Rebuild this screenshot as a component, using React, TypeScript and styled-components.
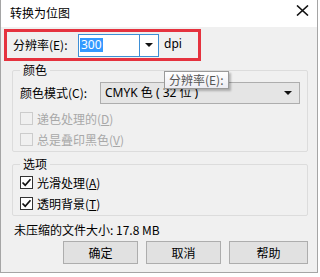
import styled, { createGlobalStyle } from "styled-components";

const GlobalStyle = createGlobalStyle`
  html, body {
    margin: 0;
    padding: 0;
    background: #ffffff;
  }
  body {
    font-family: "Noto Sans CJK SC", "Noto Sans", sans-serif;
    font-size: 12px;
    color: #000;
  }
`;

const App = () => {
  return (
    <>
      <GlobalStyle />
      <Window>
        <TitleBar>
          <Title>转换为位图</Title>
          <CloseButton>
            <svg width="13" height="11" viewBox="0 0 13 11">
              <path d="M1 0.5 L12 10.5 M12 0.5 L1 10.5" stroke="#111" strokeWidth="1.6" />
            </svg>
          </CloseButton>
        </TitleBar>
        <Body>
          <Highlight>
            <FieldLabel width={65}>分辨率(E):</FieldLabel>
            <Combo>
              <ComboValue>
                <Selected>300</Selected>
              </ComboValue>
              <ComboArrow focused>
                <Triangle />
              </ComboArrow>
            </Combo>
            <Unit>dpi</Unit>
          </Highlight>

          <Group>
            <Legend>颜色</Legend>
            <SelectRow>
              <FieldLabel width={80}>颜色模式(C):</FieldLabel>
              <Select>
                <span>CMYK 色 ( 32 位 )</span>
                <Triangle />
              </Select>
            </SelectRow>
            <CheckRow disabled>
              <CheckBox disabled />
              <span>
                递色处理的(<u>D</u>)
              </span>
            </CheckRow>
            <CheckRow disabled>
              <CheckBox disabled />
              <span>
                总是叠印黑色(<u>V</u>)
              </span>
            </CheckRow>
          </Group>

          <Group spaced>
            <Legend>选项</Legend>
            <CheckRow>
              <CheckBox>
                <CheckMark />
              </CheckBox>
              <span>
                光滑处理(<u>A</u>)
              </span>
            </CheckRow>
            <CheckRow>
              <CheckBox>
                <CheckMark />
              </CheckBox>
              <span>
                透明背景(<u>T</u>)
              </span>
            </CheckRow>
          </Group>

          <Status>未压缩的文件大小: 17.8 MB</Status>

          <ButtonRow>
            <Button width={75}>确定</Button>
            <Button width={75}>取消</Button>
            <Button width={79}>帮助</Button>
          </ButtonRow>
        </Body>
        <Tooltip>分辨率(E):</Tooltip>
      </Window>
    </>
  );
};

const CheckMark = () => (
  <svg width="11" height="11" viewBox="0 0 11 11">
    <path d="M1.5 5.5 L4.2 8.2 L9.5 2.2" fill="none" stroke="#111" strokeWidth="1.7" />
  </svg>
);

const Window = styled.div`
  position: relative;
  width: 316px;
  height: 272px;
  border: 1px solid #a5a5a5;
  border-top: none;
  background: #f0f0f0;
  display: flex;
  flex-direction: column;
`;

const TitleBar = styled.div`
  height: 27px;
  background: #ffffff;
  display: flex;
  align-items: center;
  justify-content: space-between;
  padding: 0 8px 2px 9px;
  box-sizing: border-box;
`;

const Title = styled.div`
  font-size: 12px;
  line-height: 16px;
`;

const CloseButton = styled.div`
  display: flex;
  margin-top: -4px;
`;

const Body = styled.div`
  display: flex;
  flex-direction: column;
  padding: 2px 9px 0 3px;
`;

const Highlight = styled.div`
  width: 197px;
  height: 32px;
  box-sizing: border-box;
  border: 3px solid #e5323e;
  display: flex;
  align-items: center;
  padding-left: 6px;
`;

interface IWidth {
  width: number;
}

const FieldLabel = styled.div<IWidth>`
  width: ${(p) => p.width}px;
  flex-shrink: 0;
  line-height: 16px;
  white-space: nowrap;
`;

const Combo = styled.div`
  width: 81px;
  height: 23px;
  box-sizing: border-box;
  border: 1px solid #3d8fd6;
  background: #fff;
  display: flex;
`;

const ComboValue = styled.div`
  flex: 1;
  display: flex;
  align-items: center;
  padding-left: 1px;
`;

const Selected = styled.span`
  background: #3399ff;
  color: #fff;
  font-family: "Noto Sans", sans-serif;
  font-size: 12px;
  line-height: 14px;
  padding: 0 1px;
`;

const ComboArrow = styled.div<{ focused?: boolean }>`
  width: 18px;
  border-left: 1px solid ${(p) => (p.focused ? "#3d8fd6" : "#acacac")};
  display: flex;
  align-items: center;
  justify-content: center;
`;

const Triangle = styled.div`
  width: 0;
  height: 0;
  border-left: 4px solid transparent;
  border-right: 4px solid transparent;
  border-top: 4px solid #111;
`;

const Unit = styled.div`
  margin-left: 5px;
  font-family: "Noto Sans", sans-serif;
  line-height: 16px;
  padding-bottom: 2px;
`;

const Group = styled.fieldset<{ spaced?: boolean }>`
  margin: ${(p) => (p.spaced ? "4px" : "1px")} 0 0 8px;
  padding: 0 7px 1px 7px;
  border: 1px solid #dcdcdc;
  border-radius: 2px;
  width: 296px;
  box-sizing: border-box;
  min-width: 0;
`;

const Legend = styled.legend`
  padding: 0 3px;
  line-height: 16px;
  font-size: 12px;
`;

const SelectRow = styled.div`
  display: flex;
  align-items: center;
  margin-top: 4px;
  margin-bottom: 4px;
`;

const Select = styled.div`
  flex: 1;
  height: 22px;
  box-sizing: border-box;
  border: 1px solid #adadad;
  background: #e5e5e5;
  display: flex;
  align-items: center;
  justify-content: space-between;
  padding: 0 7px 0 4px;
  font-family: "Noto Sans", "Noto Sans CJK SC", sans-serif;
  line-height: 16px;
`;

const CheckRow = styled.div<{ disabled?: boolean }>`
  height: 21px;
  display: flex;
  align-items: center;
  gap: 4px;
  color: ${(p) => (p.disabled ? "#a8a8a8" : "#000")};
  line-height: 16px;
`;

const CheckBox = styled.div<{ disabled?: boolean }>`
  width: 13px;
  height: 13px;
  box-sizing: border-box;
  border: 1px solid ${(p) => (p.disabled ? "#cccccc" : "#333")};
  background: ${(p) => (p.disabled ? "#f0f0f0" : "#fff")};
  display: flex;
  align-items: center;
  justify-content: center;
`;

const Status = styled.div`
  margin: 6px 0 0 10px;
  line-height: 16px;
`;

const ButtonRow = styled.div`
  display: flex;
  justify-content: flex-end;
  gap: 8px;
  margin-top: 3px;
`;

const Button = styled.div<IWidth>`
  width: ${(p) => p.width}px;
  height: 23px;
  box-sizing: border-box;
  border: 1px solid #adadad;
  background: #e1e1e1;
  display: flex;
  align-items: center;
  justify-content: center;
  line-height: 16px;
`;

const Tooltip = styled.div`
  position: absolute;
  left: 163px;
  top: 71px;
  height: 18px;
  box-sizing: border-box;
  padding: 0 4px;
  border: 1px solid #9a9a9a;
  background: linear-gradient(#ffffff, #ececf2);
  box-shadow: 2px 2px 2px rgba(0, 0, 0, 0.25);
  display: flex;
  align-items: center;
  color: #555;
  line-height: 16px;
`;

export default App;
